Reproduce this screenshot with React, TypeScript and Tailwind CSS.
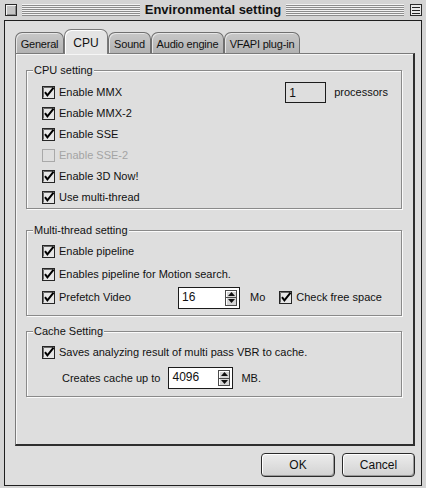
import React from "react";

const font = "font-['Liberation_Sans',Arial,Helvetica,sans-serif]";

function CheckBox({ checked = true, disabled = false }: { checked?: boolean; disabled?: boolean }) {
  return (
    <svg width="13" height="13" viewBox="0 0 13 13" className="shrink-0">
      <rect
        x="0.5"
        y="0.5"
        width="12"
        height="12"
        fill={disabled ? "#dedede" : "#e6e6e6"}
        stroke={disabled ? "#a9a9a9" : "#262626"}
      />
      {!disabled && <path d="M1.5 1.5 H11.5 M1.5 1.5 V11.5" stroke="#6a6a6a" strokeWidth="1" />}
      {checked && (
        <path d="M3 6.2 L5.4 9.4 L11.6 1.6" stroke="#000" strokeWidth="2" fill="none" />
      )}
    </svg>
  );
}

function CheckRow({
  label,
  checked = true,
  disabled = false,
  className = "h-[21px]",
  children,
}: {
  label: string;
  checked?: boolean;
  disabled?: boolean;
  className?: string;
  children?: React.ReactNode;
}) {
  return (
    <div className={`flex items-center ${className}`}>
      <CheckBox checked={checked} disabled={disabled} />
      <span className={`ml-[4px] ${disabled ? "text-[#a4a4a4]" : "text-[#111]"}`}>{label}</span>
      {children}
    </div>
  );
}

function Group({
  title,
  className,
  children,
}: {
  title: string;
  className: string;
  children: React.ReactNode;
}) {
  return (
    <div
      className={`relative border border-[#8a8a8a] shadow-[inset_1px_1px_0_#fbfbfb,1px_1px_0_#fbfbfb] ${className}`}
    >
      <span className="absolute left-[6px] top-[-7px] bg-[#dedede] px-[1px] leading-[13px] text-[#111]">
        {title}
      </span>
      {children}
    </div>
  );
}

function Spinner({ value, width }: { value: string; width: string }) {
  return (
    <div className={`flex h-[22px] items-stretch border border-[#1c1c1c] bg-white ${width}`}>
      <span className="flex-1 pl-[3px] pt-[2px] leading-[15px] text-[12px] text-[#111]">{value}</span>
      <div className="my-[2px] mr-[2px] flex w-[12px] flex-col border border-[#4a4a4a] bg-[#d6d6d6] shadow-[inset_1px_1px_0_#fff]">
        <div className="flex flex-1 items-center justify-center border-b border-[#4a4a4a]">
          <svg width="7" height="4" viewBox="0 0 7 4">
            <path d="M0 4 L3.5 0 L7 4 Z" fill="#111" />
          </svg>
        </div>
        <div className="flex flex-1 items-center justify-center">
          <svg width="7" height="4" viewBox="0 0 7 4">
            <path d="M0 0 L3.5 4 L7 0 Z" fill="#111" />
          </svg>
        </div>
      </div>
    </div>
  );
}

const tabs = [
  { label: "General", w: "w-[49px]" },
  { label: "CPU", w: "w-[44px]", active: true },
  { label: "Sound", w: "w-[43px]" },
  { label: "Audio engine", w: "w-[73px]" },
  { label: "VFAPI plug-in", w: "w-[76px]" },
];

function Stripes() {
  return (
    <div className="h-[12px] flex-1 bg-[repeating-linear-gradient(to_bottom,#f2f2f2_0px,#f2f2f2_1px,#8c8c8c_1px,#8c8c8c_2px)]" />
  );
}

export default function App() {
  return (
    <div className={`flex h-[488px] w-[426px] flex-col bg-[#d4d4d4] text-[11px] ${font}`}>
      {/* title bar */}
      <div className="flex h-[20px] items-center pl-[5px] pr-[4px]">
        <div className="h-[12px] w-[12px] border border-[#2a2a2a] bg-[#c4c4c4] shadow-[inset_1px_1px_0_#f4f4f4,inset_-1px_-1px_0_#8a8a8a]" />
        <div className="ml-[5px] flex flex-1 items-center">
          <Stripes />
          <span className="px-[5px] text-[13px] font-bold leading-[16px] text-[#111]">
            Environmental setting
          </span>
          <Stripes />
        </div>
        <div className="ml-[6px] flex h-[12px] w-[12px] flex-col justify-center gap-[2px] border border-[#2a2a2a] bg-[#e8e8e8] px-[1px]">
          <div className="h-[1px] bg-[#222]" />
          <div className="h-[1px] bg-[#222]" />
          <div className="h-[1px] bg-[#222]" />
        </div>
      </div>

      {/* window body */}
      <div className="mx-[4px] mb-[2px] flex flex-1 flex-col border border-[#1e1e1e] bg-[#dedede]">
        {/* tabs */}
        <div className="mt-[8px] flex h-[24px] items-end pl-[10px]">
          {tabs.map((t) =>
            t.active ? (
              <div
                key={t.label}
                className={`relative z-10 mb-[-1px] flex h-[25px] items-start justify-center rounded-t-[7px] border border-b-0 border-[#7a7a7a] bg-[#e4e4e4] pt-[4px] text-[12px] text-[#111] shadow-[inset_1px_1px_0_#fff] ${t.w}`}
              >
                {t.label}
              </div>
            ) : (
              <div
                key={t.label}
                className={`flex h-[21px] items-center justify-center whitespace-nowrap rounded-t-[7px] border border-b-0 border-[#707070] bg-[linear-gradient(to_bottom,#c8c8c8,#b2b2b2)] pt-[3px] text-[11px] tracking-[-0.2px] text-[#111] shadow-[inset_1px_1px_0_#e6e6e6] ${t.w}`}
              >
                {t.label}
              </div>
            )
          )}
        </div>

        {/* tab panel */}
        <div className="ml-[10px] mr-[6px] h-[393px] border border-[#7a7a7a] border-b-[2px] border-r-[2px] border-b-[#2e2e2e] border-r-[#2e2e2e] bg-[#dedede] pl-[10px] pr-[11px] pt-[16px] shadow-[inset_1px_1px_0_#f6f6f6]">
          <Group title="CPU setting" className="pb-[0px] pl-[15px] pr-[13px] pt-[11px]">
            <CheckRow label="Enable MMX">
              <div className="ml-auto flex h-[21px] w-[41px] items-center border border-[#1c1c1c] pl-[3px] text-[12px]">
                <span className="text-[#111111]">1</span>
              </div>
              <span className="ml-[8px] text-[#111]">processors</span>
            </CheckRow>
            <CheckRow label="Enable MMX-2" />
            <CheckRow label="Enable SSE" />
            <CheckRow label="Enable SSE-2" checked={false} disabled />
            <CheckRow label="Enable 3D Now!" />
            <CheckRow label="Use multi-thread" />
          </Group>

          <Group title="Multi-thread setting" className="mt-[21px] pb-[6px] pl-[15px] pr-[13px] pt-[9px]">
            <CheckRow label="Enable pipeline" className="h-[23px]" />
            <CheckRow label="Enables pipeline for Motion search." className="h-[23px]" />
            <div className="flex h-[23px] items-center">
              <CheckBox />
              <span className="ml-[4px] w-[119px] text-[#111]">Prefetch Video</span>
              <Spinner value="16" width="w-[62px]" />
              <span className="ml-[10px] text-[#111]">Mo</span>
              <div className="ml-[14px]">
                <CheckRow label="Check free space" className="h-[23px]" />
              </div>
            </div>
          </Group>

          <Group title="Cache Setting" className="mt-[15px] pb-[6px] pl-[15px] pr-[13px] pt-[10px]">
            <CheckRow label="Saves analyzing result of multi pass VBR to cache." />
            <div className="mt-[3px] flex h-[24px] items-center pl-[20px]">
              <span className="text-[#111]">Creates cache up to</span>
              <div className="ml-[8px]">
                <Spinner value="4096" width="w-[65px]" />
              </div>
              <span className="ml-[8px] text-[#111]">MB.</span>
            </div>
          </Group>
        </div>

        {/* buttons */}
        <div className="mt-[7px] flex justify-end gap-[7px] pr-[6px]">
          <button className="h-[24px] w-[74px] rounded-[4px] border border-[#2a2a2a] bg-[linear-gradient(to_bottom,#ececec,#d2d2d2)] text-[12px] text-[#111] shadow-[inset_1px_1px_0_#fff,inset_-1px_-1px_0_#9a9a9a]">
            OK
          </button>
          <button className="h-[24px] w-[73px] rounded-[4px] border border-[#2a2a2a] bg-[linear-gradient(to_bottom,#ececec,#d2d2d2)] text-[12px] text-[#111] shadow-[inset_1px_1px_0_#fff,inset_-1px_-1px_0_#9a9a9a]">
            Cancel
          </button>
        </div>
      </div>
    </div>
  );
}
